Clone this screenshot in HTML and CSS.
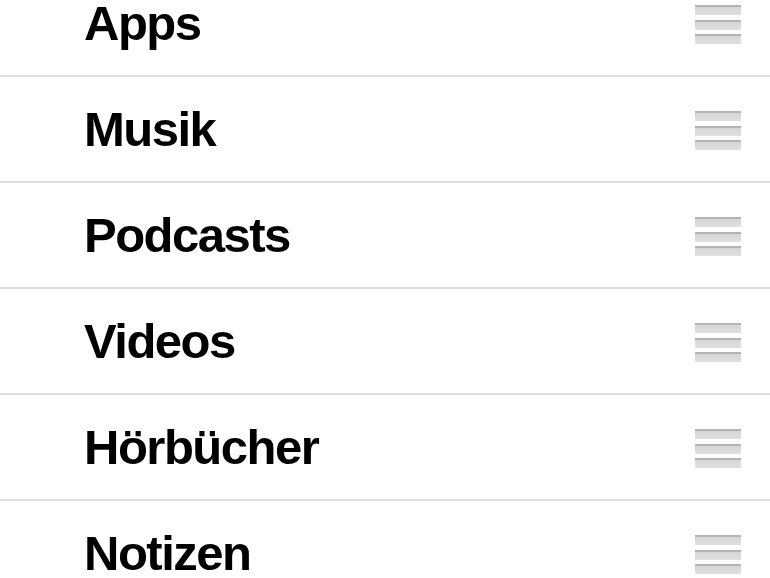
FILE: index.html
```html
<!DOCTYPE html>
<html lang="de">
<head>
<meta charset="UTF-8">
<meta name="viewport" content="width=device-width, initial-scale=1.0">
<title>Reihenfolge</title>
<link rel="stylesheet" href="styles.css">
</head>
<body>
<ul id="sortList">
    <li class="row"><span class="label">Apps</span><span class="grip"><i></i><i></i><i></i></span></li>
    <li class="row"><span class="label">Musik</span><span class="grip"><i></i><i></i><i></i></span></li>
    <li class="row"><span class="label">Podcasts</span><span class="grip"><i></i><i></i><i></i></span></li>
    <li class="row"><span class="label">Videos</span><span class="grip"><i></i><i></i><i></i></span></li>
    <li class="row"><span class="label">Hörbücher</span><span class="grip"><i></i><i></i><i></i></span></li>
    <li class="row"><span class="label">Notizen</span><span class="grip"><i></i><i></i><i></i></span></li>
</ul>
</body>
</html>
```

FILE: styles.css
```css
body {
    margin: 0;
    background-color: #fff;
    overflow: hidden;
    font-family: "Liberation Sans", Arial, sans-serif;
}

#sortList {
    list-style: none;
    margin: -29px 0 0 0;
    padding: 0;
}

.row {
    display: flex;
    align-items: center;
    justify-content: space-between;
    height: 104px;
    padding: 0 29px 0 84px;
    border-bottom: 2px solid #dedede;
}

.label {
    font-size: 49px;
    font-weight: bold;
    letter-spacing: -1.5px;
    color: #000;
}

.grip {
    display: flex;
    flex-direction: column;
    gap: 4.5px;
    width: 46px;
    margin-top: 3px;
}

.grip i {
    display: block;
    height: 10px;
    background: linear-gradient(#b4b4b4 0, #b4b4b4 2px, #d6d6d6 2px, #e0e0e0 100%);
}
```
